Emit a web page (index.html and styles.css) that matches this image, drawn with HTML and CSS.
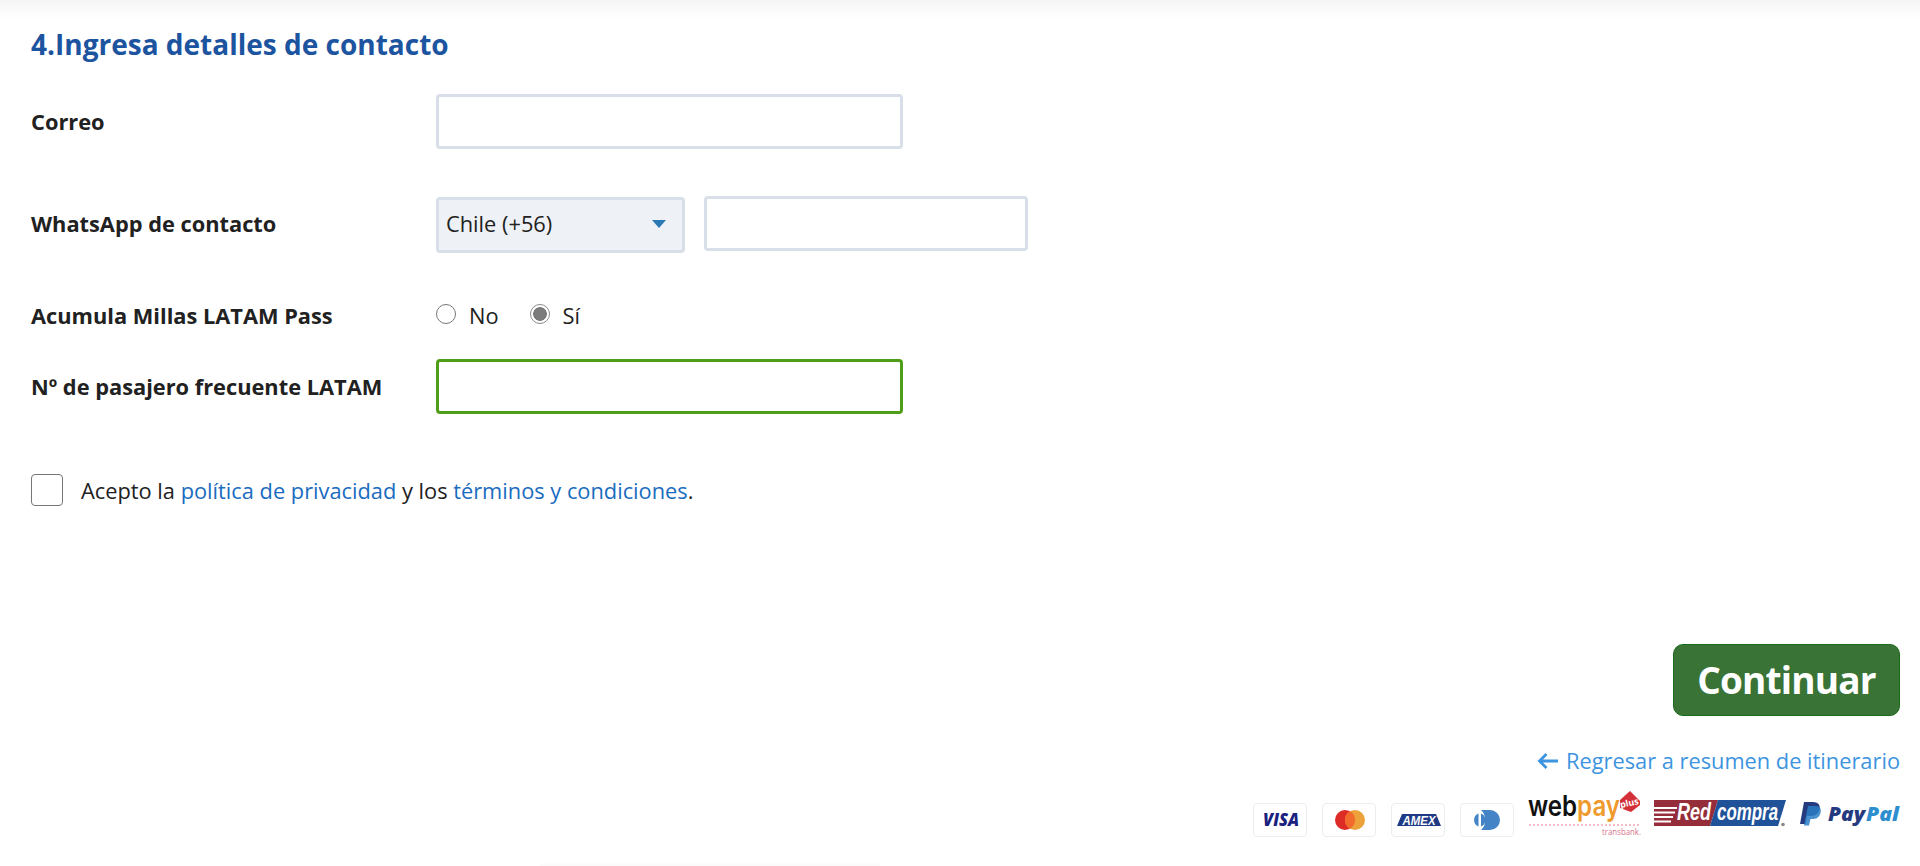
FILE: index.html
```html
<!DOCTYPE html>
<html lang="es">
<head>
<meta charset="utf-8">
<title>Ingresa detalles de contacto</title>
<link rel="stylesheet" href="styles.css">
</head>
<body>
<main class="page">
  <h2 class="title">4.Ingresa detalles de contacto</h2>
  <div class="row row-mail">
    <label class="label">Correo</label>
    <div class="input input-wide"></div>
  </div>
  <div class="row row-phone">
    <label class="label label-up">WhatsApp de contacto</label>
    <div class="select"><span class="select-text">Chile (+56)</span><i class="caret"></i></div>
    <div class="input input-phone"></div>
  </div>
  <div class="row row-miles">
    <label class="label">Acumula Millas LATAM Pass</label>
    <div class="radios">
      <span class="radio"></span><span class="radio-text">No</span>
      <span class="radio radio-on"></span><span class="radio-text">Sí</span>
    </div>
  </div>
  <div class="row row-freq">
    <label class="label">Nº de pasajero frecuente LATAM</label>
    <div class="input input-wide input-ok"></div>
  </div>
  <div class="terms">
    <span class="check"></span>
    <p>Acepto la <a>política de privacidad</a> y los <a>términos y condiciones</a>.</p>
  </div>
  <div class="actions">
    <button class="continue">Continuar</button>
    <a class="back"><svg class="arrow" viewBox="0 0 22 18" width="22" height="18"><path d="M21 9H2.500M9.500 2 2.500 9l7 7" fill="none" stroke="#3d94e0" stroke-width="2.800"/></svg>Regresar a resumen de itinerario</a>
    <div class="pay">
      <span class="card"><svg viewBox="0 0 52 32" width="52" height="32"><text x="9" y="21.500" class="visa" textLength="36" lengthAdjust="spacingAndGlyphs">VISA</text></svg></span>
      <span class="card"><svg viewBox="0 0 52 32" width="52" height="32"><circle cx="22" cy="16" r="10" fill="#dd2c26"/><circle cx="32" cy="16" r="10" fill="#eda13a"/><path d="M27 7.300a10 10 0 0 1 0 17.400 10 10 0 0 1 0-17.400z" fill="#f26b2c"/></svg></span>
      <span class="card"><svg viewBox="0 0 52 32" width="52" height="32"><path d="M5 22 10 10H44L49 22z" fill="#1f3b86"/><text x="10.500" y="20.500" class="amex" textLength="33" lengthAdjust="spacingAndGlyphs">AMEX</text></svg></span>
      <span class="card"><svg viewBox="0 0 52 32" width="52" height="32"><path d="M20 6h9a10 10 0 0 1 0 20h-9a12 12 0 0 0 4-10 12 12 0 0 0-4-10z" fill="#4383c6"/><path d="M17.500 9.500v13a7 7 0 0 1 0-13zM20 9.500a7 7 0 0 1 0 13z" fill="#4383c6"/></svg></span>
      <svg class="logo-webpay" viewBox="0 0 113 46" width="113" height="46">
        <text x="0" y="25" class="wp-word" textLength="92" lengthAdjust="spacingAndGlyphs"><tspan class="wp-web">web</tspan><tspan class="wp-pay">pay</tspan></text>
        <path d="M102 0 112 10 112 14 103 21 92 17 92 9z" fill="#d4303a"/>
        <text x="102" y="15" class="wp-plus" text-anchor="middle" transform="rotate(-12 102 15)">plus</text>
        <path d="M1 34H113" stroke="#efa6b6" stroke-width="1.500" stroke-dasharray="2 2"/>
        <text x="74" y="44" class="wp-tb" textLength="39" lengthAdjust="spacingAndGlyphs">transbank.</text>
      </svg>
      <svg class="logo-red" viewBox="0 0 132 27" width="132" height="27">
        <path d="M0 0H64L56 26H0z" fill="#962d3a"/>
        <path d="M64 0H132L124 26H56z" fill="#1f5299"/>
        <path d="M0 8H23M0 12.500H21M0 17H19M0 21.500H17" stroke="#fff" stroke-width="2"/>
        <text class="red-a" transform="translate(23 20) scale(.75 1)">Red</text>
        <text class="red-b" transform="translate(63 20) scale(.735 1)">compra</text>
        <circle cx="129" cy="24.500" r="1.800" fill="#888"/>
      </svg>
      <svg class="logo-paypal" viewBox="0 0 101 25" width="101" height="25">
        <path d="M5 1H14C20 1 21.500 5 20.500 8.500 19 14 15 15 11 15H8L6.500 23H1z" fill="#253b80"/>
        <path d="M9 5H16C21.500 5 22.500 8 21.500 12 20 17 17 18 13 18H11.500L10 24.500H5z" fill="#2a7ec4" opacity=".85"/>
        <text x="29" y="20" class="pp-a" textLength="37" lengthAdjust="spacingAndGlyphs">Pay</text>
        <text x="67" y="20" class="pp-b" textLength="33" lengthAdjust="spacingAndGlyphs">Pal</text>
      </svg>
    </div>
  </div>
</main>
<div class="foot-shade"></div>
</body>
</html>
```
FILE: styles.css
```css
* { box-sizing: border-box; }
html, body { margin: 0; padding: 0; }
body {
  height: 866px;
  overflow: hidden;
  background: #fff;
  font-family: "Open Sans", "Noto Sans", sans-serif;
  color: #212121;
}
.page {
  height: 866px;
  padding: 26px 20px 0 31px;
  background: linear-gradient(#f5f5f5 0, #fff 20px);
  display: flex;
  flex-direction: column;
}
.title {
  margin: 0;
  font-size: 28px;
  line-height: 36px;
  font-weight: 700;
  color: #1c549f;
}
.row { display: flex; align-items: center; }
.label {
  width: 405px;
  flex: none;
  font-size: 21.800px;
  font-weight: 700;
  color: #212121;
}
.label-up { padding-bottom: 2px; }
.row-mail { margin-top: 32px; height: 55px; }
.row-phone { margin-top: 47px; height: 57px; }
.row-miles { margin-top: 44px; height: 36px; }
.row-freq { margin-top: 26px; height: 55px; }
.input {
  height: 55px;
  border: 3px solid #d8dfe8;
  border-radius: 4px;
  background: #fff;
}
.input-wide { width: 467px; }
.input-phone { width: 324px; margin-left: 19px; margin-top: -3px; }
.input-ok { border-color: #4f9e18; }
.select {
  width: 249px;
  height: 56px;
  margin-top: 1px;
  padding: 0 16px 0 7px;
  border: 3px solid #d8dfe8;
  border-radius: 4px;
  background: #eef1f5;
  display: flex;
  align-items: center;
  justify-content: space-between;
  font-size: 21.800px;
}
.select-text { padding-bottom: 3px; }
.caret {
  width: 0;
  height: 0;
  margin-bottom: 2px;
  border-left: 7px solid transparent;
  border-right: 7px solid transparent;
  border-top: 8px solid #2b79b5;
}
.radios { display: flex; align-items: center; font-size: 21.800px; }
.radio {
  width: 20px;
  height: 20px;
  border: 1px solid #767676;
  border-radius: 50%;
  background: #fff;
  margin-top: -3px;
}
.radio-on {
  background: radial-gradient(circle, #7b7b7b 0 6.500px, #fff 7.200px);
  border-color: #8a8a8a;
}
.radio-text { margin: 0 31px 0 13px; }
.radio-on + .radio-text { margin-right: 0; }
.terms {
  display: flex;
  align-items: center;
  margin-top: 59px;
  height: 34px;
}
.check {
  width: 32px;
  height: 32px;
  border: 1px solid #767676;
  border-radius: 4px;
  background: #fff;
  flex: none;
}
.terms p { margin: 0 0 0 18px; font-size: 21.800px; }
.terms a { color: #1a6cc0; }
.actions {
  margin-top: 137px;
  display: flex;
  flex-direction: column;
  align-items: flex-end;
}
.continue {
  width: 227px;
  height: 72px;
  border: 1px solid #1d6a1a;
  border-radius: 10px;
  background: #397335;
  color: #fff;
  font-family: inherit;
  font-size: 37px;
  font-weight: 700;
  letter-spacing: -.800px;
  padding: 0 0 2px;
}
.back {
  margin-top: 30px;
  display: flex;
  align-items: center;
  gap: 7px;
  font-size: 21.800px;
  line-height: 30px;
  color: #3d94e0;
}
.pay {
  margin-top: 15px;
  display: flex;
  align-items: flex-start;
  height: 45px;
}
.card {
  width: 54px;
  height: 34px;
  margin: 12px 15px 0 0;
  border: 1px solid #ecedf0;
  border-radius: 4px;
  display: flex;
  align-items: center;
  justify-content: center;
  background: #fff;
}
.card svg { flex: none; }
.visa { font: italic 800 17px "Open Sans", sans-serif; fill: #1a2180; }
.amex { font: italic 800 13px "Liberation Sans", sans-serif; fill: #fff; }
.logo-webpay { flex: none; margin-left: -1px; overflow: visible; }
.logo-red { flex: none; margin: 9px 0 0 13px; overflow: visible; }
.logo-paypal { flex: none; margin: 10px 0 0 13px; overflow: visible; }
.wp-word { font: 600 28px "Inter", sans-serif; }
.wp-web { fill: #111; }
.wp-pay { fill: #ef9a2d; }
.wp-plus { font: 700 9px "Open Sans", sans-serif; fill: #fff; }
.wp-tb { font: 400 9.500px "Open Sans", sans-serif; fill: #d8728a; }
.red-a { font: italic 700 24px "Liberation Sans", sans-serif; fill: #fff; }
.red-b { font: italic 700 23px "Liberation Sans", sans-serif; fill: #fff; }
.pp-a { font: italic 800 20px "Open Sans", sans-serif; fill: #253b80; }
.pp-b { font: italic 800 20px "Open Sans", sans-serif; fill: #2d8ecf; }
.foot-shade {
  position: absolute;
  left: 540px;
  width: 340px;
  bottom: 0;
  height: 5px;
  background: linear-gradient(transparent, #fbfbfb);
}
```
